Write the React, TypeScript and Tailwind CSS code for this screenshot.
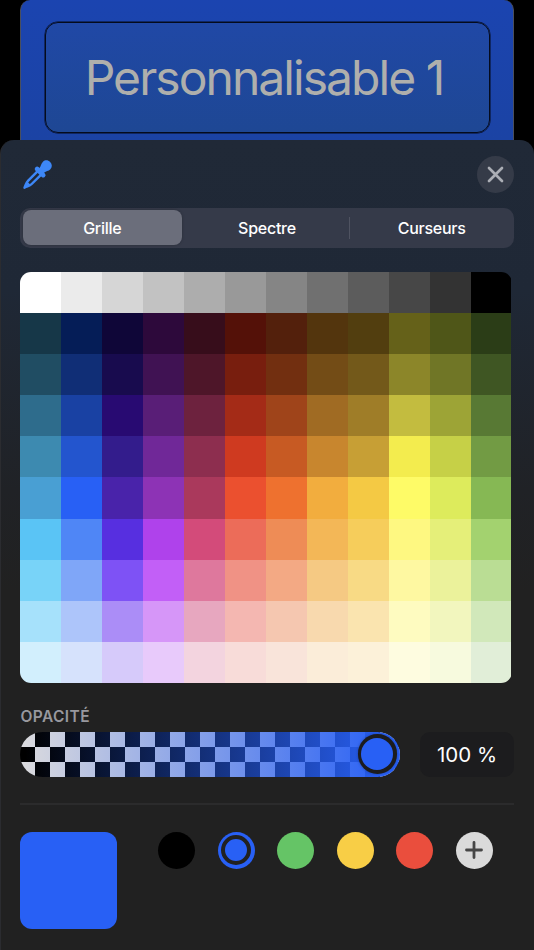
import { useState } from "react";

const GRID_COLORS = [
    ["#ffffff", "#ebebeb", "#d6d6d6", "#c2c2c2", "#adadad", "#999999", "#858585", "#707070", "#5c5c5c", "#474747", "#333333", "#000000"],
    ["#163748", "#051d57", "#0f0638", "#2d093b", "#370d1b", "#541108", "#53200c", "#53350d", "#523e0f", "#656119", "#4f5618", "#2b3d17"],
    ["#204d63", "#102e76", "#180b4e", "#401253", "#4e1629", "#781e0e", "#722f10", "#734c16", "#73591a", "#8c8629", "#707626", "#3f5623"],
    ["#2e6c8c", "#1941a3", "#280a72", "#591e77", "#6d223e", "#a42b17", "#9f441a", "#a06b23", "#9f7d28", "#c3bc3f", "#9da436", "#587934"],
    ["#3d8ab0", "#2355ce", "#331c8c", "#702898", "#8d2e4f", "#cf3a20", "#c75a23", "#c8862e", "#c79f35", "#f3ec4e", "#c6d047", "#729b44"],
    ["#499fd3", "#2860f5", "#4923aa", "#8d33b5", "#aa395c", "#eb502f", "#ee712f", "#f2ad3e", "#f4c944", "#fefb67", "#ddeb5c", "#86b854"],
    ["#5ac4f5", "#4f86f6", "#572fe0", "#af42eb", "#d34b7a", "#ec6c59", "#ee8c56", "#f3b757", "#f6cd5b", "#fef881", "#e5ef79", "#a3d26f"],
    ["#78d3f8", "#7fa6f8", "#7e52f5", "#c25ff7", "#de789d", "#f09285", "#f3a984", "#f5c983", "#f8da85", "#fef8a1", "#ebf29b", "#badd94"],
    ["#a6e1fb", "#adc5fa", "#ab8df7", "#d696f8", "#e7a7bf", "#f4b7b1", "#f5c7b0", "#f8d9ae", "#fae4af", "#fefbc0", "#f2f6be", "#d1e8ba"],
    ["#d2effd", "#d6e2fc", "#d6cafa", "#e8cafb", "#f3d4df", "#f8dcd9", "#f9e4da", "#fbedd9", "#fcf1d9", "#fefce0", "#f7fade", "#e1eed8"],
];

const SWATCHES = ["#000000", "#2860f5", "#65c466", "#f8ce46", "#ea4e3d"];
const TABS = ["Grille", "Spectre", "Curseurs"];

function EyedropperIcon() {
    return (
        <svg className="h-[34px] w-[34px]" viewBox="0 0 34 34" fill="none">
            <g transform="translate(17 18.2) rotate(45) scale(0.95)">
                <path d="M0 -19.6C3.2 -19.6 5.5 -17.4 5.5 -14.4C5.5 -11.4 3.7 -10 3.5 -7V-4H-3.5V-7C-3.7 -10 -5.5 -11.4 -5.5 -14.4C-5.5 -17.4 -3.2 -19.6 0 -19.6Z" fill="#3d87f7" />
                <rect x="-7" y="-7.2" width="14" height="5" rx="2.5" fill="#3d87f7" />
                <path d="M-2.6 -4V10.5C-2.6 13.8 -1.2 15 0 18.6C1.2 15 2.6 13.8 2.6 10.5V-4" stroke="#3d87f7" strokeWidth="2.6" strokeLinejoin="round" />
                <path d="M-2.2 12H2.2L0 19Z" fill="#3d87f7" />
            </g>
        </svg>
    )
}

function Header() {
    return (
        <div className="flex h-[37px] items-center justify-between">
            <EyedropperIcon />
            <button className="flex h-[37px] w-[37px] items-center justify-center rounded-full bg-[#353b48]">
                <svg className="h-[17px] w-[17px]" viewBox="0 0 17 17" stroke="#abaeb5" strokeWidth="2.7" strokeLinecap="round">
                    <path d="M2 2L15 15M15 2L2 15" />
                </svg>
            </button>
        </div>
    )
}

function Tabs() {
    const [ active, setActive ] = useState("Grille");

    return (
        <div className="mt-[15px] grid h-10 grid-cols-3 rounded-[10px] bg-[#353a49] text-[16px] font-medium tracking-[-0.25px] text-white">
            {TABS.map((tab) => (
                <button key={tab} onClick={() => setActive(tab)} className="relative flex items-center justify-center">
                    {active === tab && (
                        <span className="absolute inset-y-[2.5px] left-[2.5px] right-[3px] rounded-lg bg-[#6b6e7b] shadow-[0_0_3px_rgba(0,0,0,0.25)]" />
                    )}
                    {tab === "Curseurs" && active === "Grille" && (
                        <span className="absolute left-0 top-[9px] h-[22px] w-px bg-[#4f5361]" />
                    )}
                    <span className="relative">{tab}</span>
                </button>
            ))}
        </div>
    )
}

function ColorGrid({ onPick }: any) {
    return (
        <div className="mt-[24.2px] grid h-[411.6px] w-[491.5px] grid-cols-12 grid-rows-10 overflow-hidden rounded-[11px]">
            {GRID_COLORS.flat().map((color, index) => (
                <button key={index} style={{ backgroundColor: color }} onClick={() => onPick(color)} />
            ))}
        </div>
    )
}

function OpacitySlider({ color }: any) {
    return (
        <div className="flex justify-between">
            <div className="relative h-[45px] w-[380px] overflow-hidden rounded-full bg-[repeating-conic-gradient(#000_0_25%,#dadade_0_50%)] bg-[length:30px_30px]">
                <div
                    className="absolute inset-0"
                    style={{ backgroundImage: `linear-gradient(to right, transparent 5px, ${color} 368px)` }}
                />
                <div
                    className="absolute right-[3px] top-[2.5px] h-[39.5px] w-[39.5px] rounded-full bg-[#1c1c1e] p-[3.7px] shadow-[0_0_3px_rgba(0,0,0,0.3)]"
                >
                    <div className="h-full w-full rounded-full" style={{ backgroundColor: color }} />
                </div>
            </div>
            <div className="flex h-[45px] w-[94px] items-center justify-center rounded-[10px] bg-[#1c1c1e] pt-px text-[20.5px] text-white">
                100 %
            </div>
        </div>
    )
}

function Swatches({ selected, onPick }: any) {
    return (
        <div className="ml-[41px] flex gap-[22.5px]">
            {SWATCHES.map((color) => (
                <button
                    key={color}
                    onClick={() => onPick(color)}
                    className="flex h-[37px] w-[37px] items-center justify-center rounded-full"
                    style={{ backgroundColor: color }}
                >
                    {selected === color && (
                        <span className="h-[30px] w-[30px] rounded-full border-4 border-[#212121]" />
                    )}
                </button>
            ))}
            <button className="flex h-[37px] w-[37px] items-center justify-center rounded-full bg-[#dadada]">
                <svg className="h-[18px] w-[18px]" viewBox="0 0 18 18" stroke="#464646" strokeWidth="2.8" strokeLinecap="round">
                    <path d="M9 1.5V16.5M1.5 9H16.5" />
                </svg>
            </button>
        </div>
    )
}

function App() {
    const [ color, setColor ] = useState("#2860f5");

    return (
        <div className="h-[950px] w-[534px] overflow-hidden bg-black font-['Inter','Liberation_Sans',sans-serif]">
            <div className="mx-5 flex h-[140px] flex-col rounded-t-[10px] border-x border-[#4a4f5c] bg-linear-to-b from-[#1b44b0] to-[#1b43a4] px-[23.5px] pt-[22px]">
                <div className="flex h-[111px] items-center justify-center rounded-[13px] border border-[#050b1c] bg-linear-to-b from-[#2048a6] to-[#1e4794] pr-[6px] pt-px shadow-[0_0_0_0.5px_#050b1c]">
                    <span className="whitespace-nowrap text-[48px] leading-none tracking-[-1.95px] text-[#afafac]">Personnalisable 1</span>
                </div>
            </div>

            <div className="h-[810px] rounded-t-[14px] border-l border-[#2b2c30] bg-[linear-gradient(#202937_0,#1f2836_150px,#202226_350px,#212121_450px)] pl-[19px] pr-5 pt-[15.5px]">
                <Header />
                <Tabs />
                <ColorGrid onPick={setColor} />
                <div className="mb-[4.9px] ml-[0.5px] mt-[23.8px] text-[15.5px] font-semibold leading-[20px] tracking-[0.4px] text-[#98989e]">OPACITÉ</div>
                <OpacitySlider color={color} />
                <div className="mt-[26.5px] h-[1.5px] bg-[#2b2b2c]" />
                <div className="mt-[27px] flex">
                    <div className="h-[97px] w-[97px] rounded-[12px]" style={{ backgroundColor: color }} />
                    <Swatches selected={color} onPick={setColor} />
                </div>
            </div>
        </div>
    )
}

export default App
